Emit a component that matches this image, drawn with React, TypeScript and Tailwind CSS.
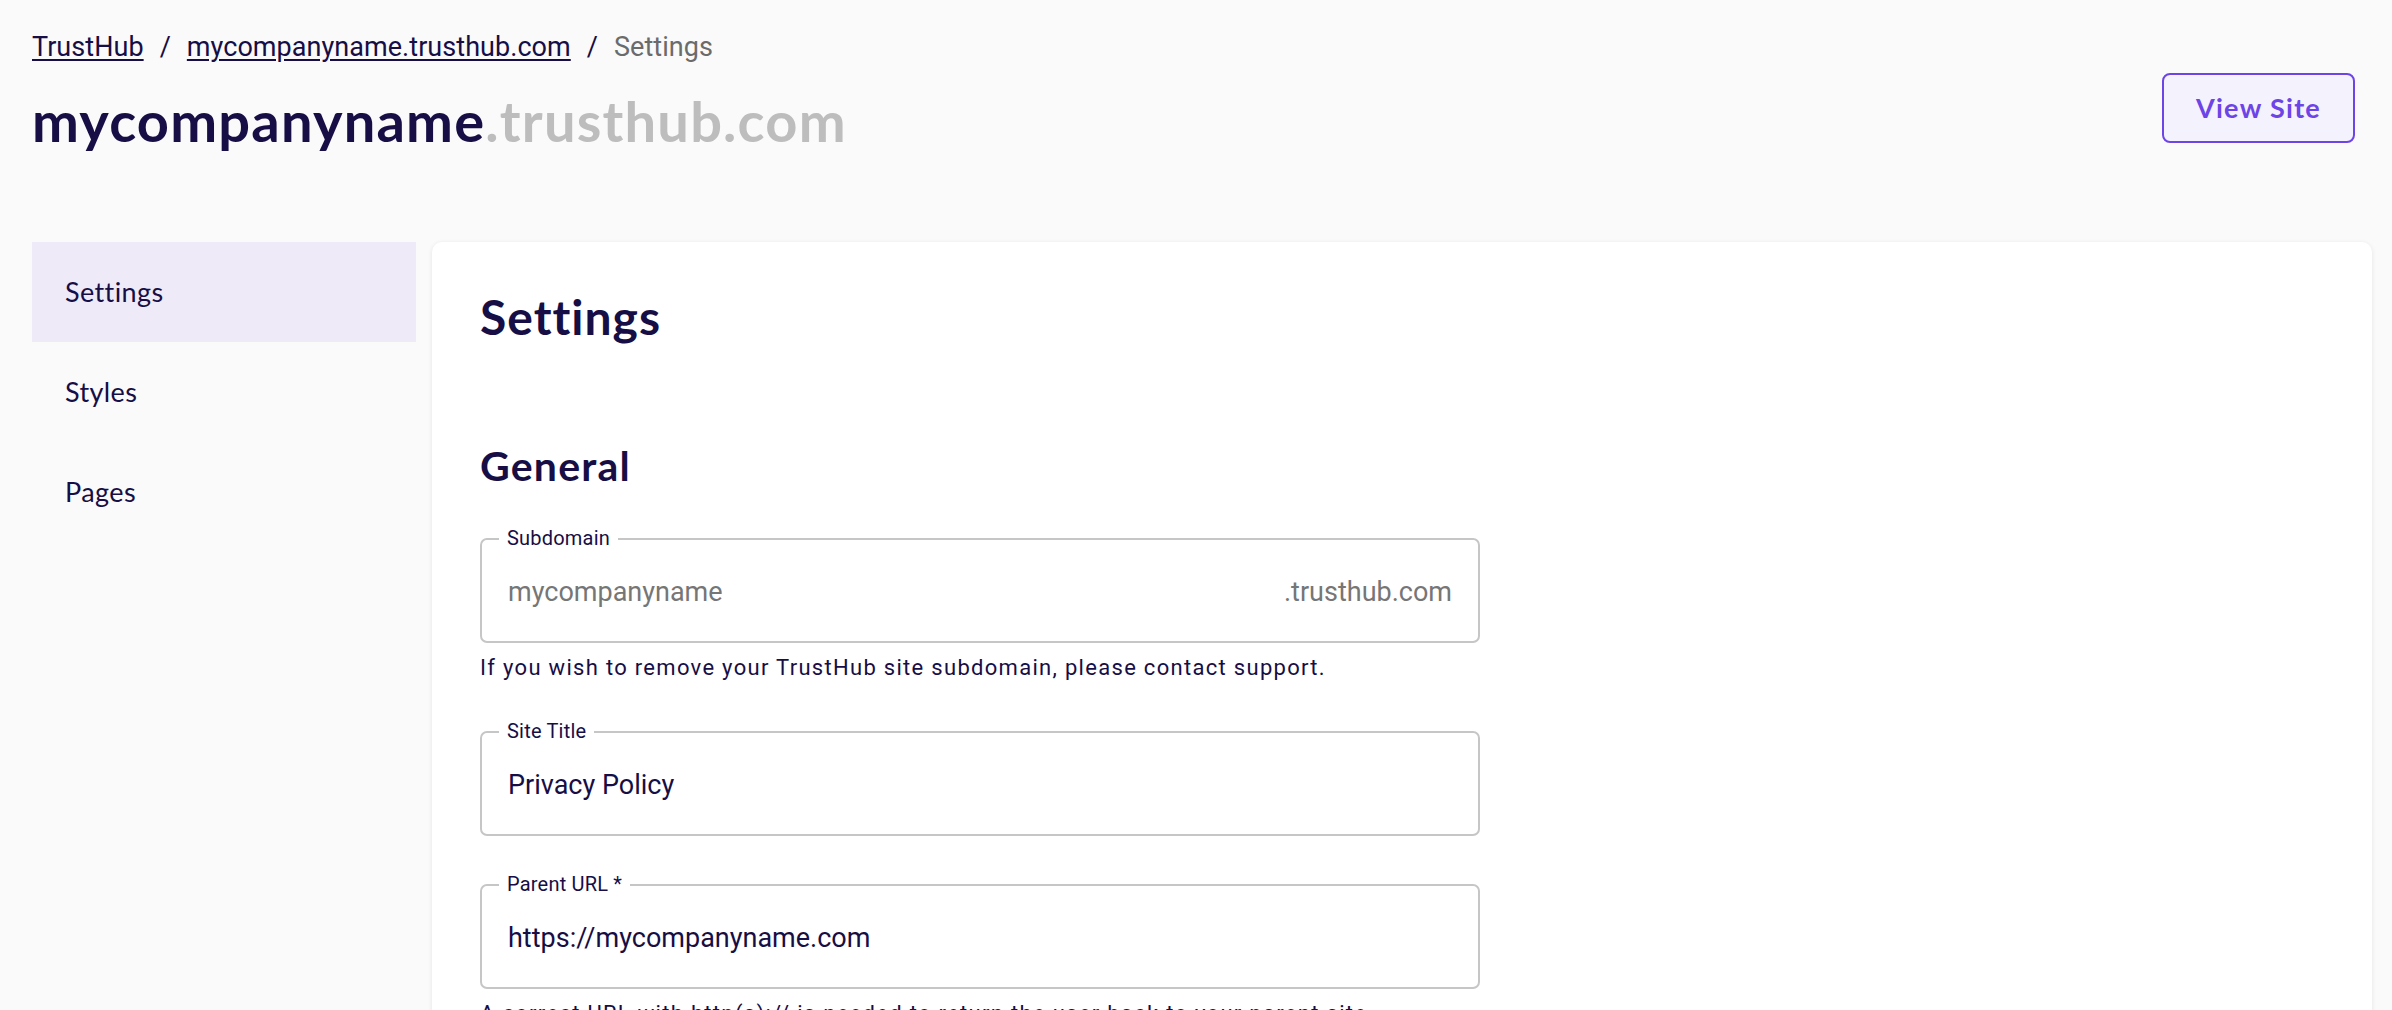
import React from "react";

const NAVY = "text-[#170e45]";

function Field({
  label,
  children,
  helper,
}: {
  label: string;
  children: React.ReactNode;
  helper?: string;
}) {
  return (
    <div className="flex flex-col w-[1000px]">
      <div className="relative h-[105px] rounded-[7px] border-2 border-[#c6c6c6] flex items-center px-[26px] pt-[4px]">
        <span
          className={`absolute -top-[14px] left-[17px] px-[8px] bg-white text-[20px] leading-[24px] tracking-[0.2px] ${NAVY}`}
        >
          {label}
        </span>
        {children}
      </div>
      {helper && (
        <p className={`mt-[10px] text-[22px] leading-[30px] tracking-[1.3px] ${NAVY}`}>{helper}</p>
      )}
    </div>
  );
}

export default function App() {
  const heading = { fontFamily: "Lato, 'Noto Sans', sans-serif" };
  return (
    <div
      className="min-h-screen bg-[#fafafa] overflow-hidden"
      style={{ fontFamily: "Roboto, 'Liberation Sans', sans-serif" }}
    >
      <header className="flex justify-between pl-[32px] pr-[37px]">
        <div className="flex flex-col pt-[27px]">
          <nav className={`flex items-center text-[27px] leading-[40px] tracking-[0.05px] ${NAVY}`}>
            <a className="underline underline-offset-[3px]" href="#">
              TrustHub
            </a>
            <span className="mx-[16px]">/</span>
            <a className="underline underline-offset-[3px]" href="#">
              mycompanyname.trusthub.com
            </a>
            <span className="mx-[16px]">/</span>
            <span className="text-[#6b6b6b]">Settings</span>
          </nav>
          <h1
            className="mt-[22px] text-[56px] leading-[64px] font-bold tracking-[1.2px]"
            style={heading}
          >
            <span className="text-[#170e45]">mycompanyname</span>
            <span className="text-[#bdbdbd]">.trusthub.com</span>
          </h1>
        </div>
        <div className="pt-[73px]">
          <button
            className="w-[193px] h-[70px] rounded-[8px] border-2 border-[#6d44e6] bg-[#f4f2fc] text-[#6d44e6] text-[27px] font-bold tracking-[1.3px]"
            style={heading}
          >
            View Site
          </button>
        </div>
      </header>

      <main className="flex gap-[16px] pl-[32px] pr-[20px] mt-[89px]">
        <aside className="w-[384px] shrink-0 flex flex-col" style={heading}>
          <div className={`h-[100px] flex items-center pl-[33px] bg-[#eeeaf8] text-[27px] tracking-[0.4px] ${NAVY}`}>
            Settings
          </div>
          <div className={`h-[100px] flex items-center pl-[33px] text-[27px] tracking-[0.4px] ${NAVY}`}>
            Styles
          </div>
          <div className={`h-[100px] flex items-center pl-[33px] text-[27px] tracking-[0.4px] ${NAVY}`}>
            Pages
          </div>
        </aside>

        <section className="flex-1 bg-white rounded-[10px] shadow-[0_1px_5px_rgba(0,0,0,0.09)] pl-[48px] pt-[46px] pb-[60px] min-h-[900px]">
          <h2 className={`text-[48px] leading-[1.2] font-bold tracking-[1px] ${NAVY}`} style={heading}>
            Settings
          </h2>
          <h3 className={`mt-[95px] text-[41px] leading-[1.2] font-bold tracking-[1.2px] ${NAVY}`} style={heading}>
            General
          </h3>
          <div className="mt-[48px] flex flex-col gap-[48px]">
            <Field
              label="Subdomain"
              helper="If you wish to remove your TrustHub site subdomain, please contact support."
            >
              <div className="flex w-full items-center justify-between text-[27px] text-[#767676]">
                <span>mycompanyname</span>
                <span>.trusthub.com</span>
              </div>
            </Field>
            <Field label="Site Title">
              <span className={`text-[27px] ${NAVY}`}>Privacy Policy</span>
            </Field>
            <Field
              label="Parent URL *"
              helper="A correct URL with http(s):// is needed to return the user back to your parent site."
            >
              <span className={`text-[27px] ${NAVY}`}>https://mycompanyname.com</span>
            </Field>
          </div>
        </section>
      </main>
    </div>
  );
}
